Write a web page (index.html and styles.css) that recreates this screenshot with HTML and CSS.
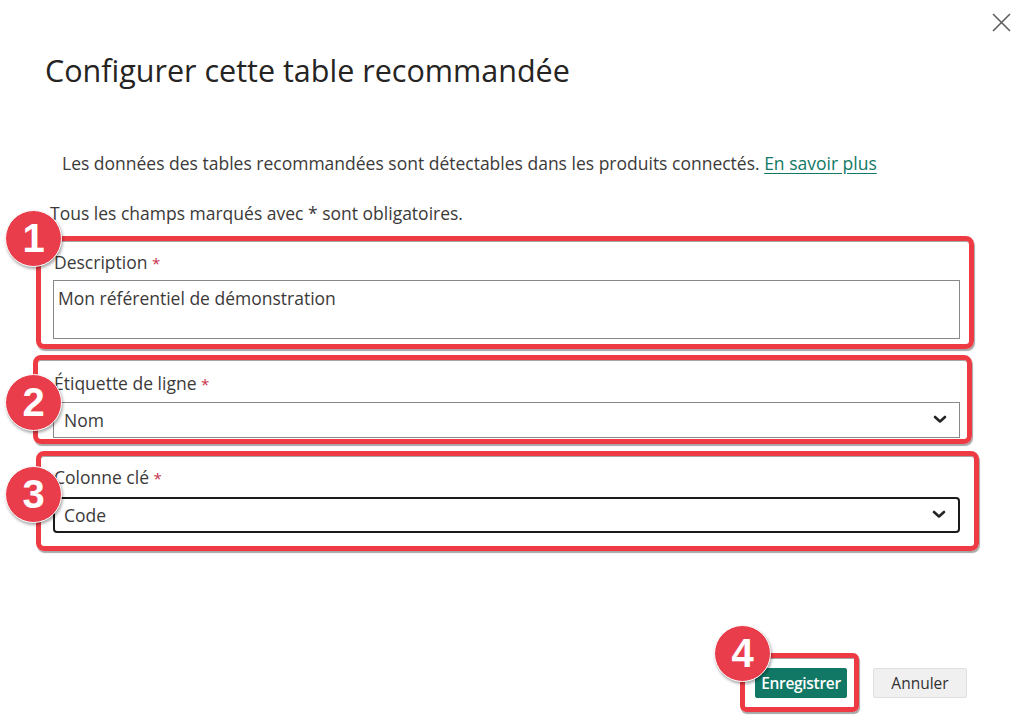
FILE: index.html
```html
<!DOCTYPE html>
<html lang="fr">
<head>
<meta charset="utf-8">
<title>Configurer cette table recommandée</title>
<link rel="stylesheet" href="styles.css">
</head>
<body>
<div class="dialog">
  <div class="topbar">
    <button class="close" aria-label="Fermer">
      <svg width="19" height="19" viewBox="0 0 19 19"><path d="M1 1 L18 18 M18 1 L1 18" stroke="#605e5c" stroke-width="1.6" fill="none"/></svg>
    </button>
  </div>
  <h1 class="title">Configurer cette table recommandée</h1>
  <p class="info">Les données des tables recommandées sont détectables dans les produits connectés. <a href="#" class="link">En savoir plus</a></p>
  <p class="note">Tous les champs marqués avec * sont obligatoires.</p>

  <div class="annot annot-1">
    <span class="badge">1</span>
    <div class="label">Description <span class="req">*</span></div>
    <div class="textarea">Mon référentiel de démonstration</div>
  </div>

  <div class="annot annot-2">
    <span class="badge">2</span>
    <div class="label">Étiquette de ligne <span class="req">*</span></div>
    <div class="select">
      <span>Nom</span>
      <svg class="chev" width="14" height="9" viewBox="0 0 14 9"><path d="M2 2 L7 6.5 L12 2" stroke="#252423" stroke-width="2.6" fill="none" stroke-linecap="round" stroke-linejoin="round"/></svg>
    </div>
  </div>

  <div class="annot annot-3">
    <span class="badge">3</span>
    <div class="label">Colonne clé <span class="req">*</span></div>
    <div class="select select-focus">
      <span>Code</span>
      <svg class="chev" width="14" height="9" viewBox="0 0 14 9"><path d="M2 2 L7 6.5 L12 2" stroke="#252423" stroke-width="2.6" fill="none" stroke-linecap="round" stroke-linejoin="round"/></svg>
    </div>
  </div>

  <div class="footer">
    <div class="annot annot-4">
      <span class="badge">4</span>
      <button class="btn btn-primary">Enregistrer</button>
    </div>
    <button class="btn btn-secondary">Annuler</button>
  </div>
</div>
</body>
</html>
```

FILE: styles.css
```css
* { box-sizing: border-box; }
html, body {
  margin: 0;
  padding: 0;
  background: #ffffff;
}
body {
  font-family: "Open Sans", "Noto Sans", "Liberation Sans", sans-serif;
  color: #323130;
  width: 1024px;
  height: 715px;
  overflow: hidden;
}
.dialog {
  display: flex;
  flex-direction: column;
}
.topbar {
  display: flex;
  justify-content: flex-end;
  padding: 13px 13px 0 0;
  height: 32px;
}
.close {
  width: 19px;
  height: 19px;
  padding: 0;
  border: 0;
  background: transparent;
  display: flex;
}
.title {
  margin: 20px 0 0 45px;
  font-size: 30.5px;
  line-height: 36px;
  font-weight: 400;
  color: #252423;
}
.info {
  margin: 64px 0 0 62px;
  font-size: 17.5px;
  line-height: 22px;
  color: #3b3a39;
}
.link {
  color: #117865;
  text-decoration: underline;
  text-underline-offset: 3px;
}
.note {
  margin: 28px 0 0 50px;
  font-size: 17.5px;
  line-height: 22px;
  color: #3b3a39;
}
.annot {
  position: relative;
  border: 5px solid #ee3b43;
  border-radius: 8px;
  box-shadow: 1px 2px 1px rgba(0, 0, 0, 0.35), inset 0 1px 0 rgba(0, 0, 0, 0.35);
}
.annot-1 {
  margin: 12px 0 0 36px;
  width: 938px;
  padding: 10px 9px 5px 12px;
}
.annot-2 {
  margin: 6px 0 0 33px;
  width: 939px;
  padding: 12px 7px 1px 15px;
}
.annot-3 {
  margin: 7px 0 0 36px;
  width: 943px;
  padding: 10px 14px 13px 12px;
}
.label {
  font-size: 17.5px;
  line-height: 22px;
  height: 22px;
  color: #3b3a39;
  padding-left: 1px;
}
.req {
  color: #c4314b;
  font-size: 15px;
  line-height: 1;
}
.annot-1 .label { margin-bottom: 7px; }
.annot-2 .label { margin-bottom: 8px; }
.annot-3 .label { margin-bottom: 9px; }
.textarea {
  height: 59px;
  border: 1.5px solid #8a8886;
  padding: 6px 4px;
  font-size: 17.5px;
  line-height: 22px;
  color: #3b3a39;
}
.select {
  height: 36px;
  border: 1px solid #8a8886;
  display: flex;
  align-items: center;
  justify-content: space-between;
  padding: 0 12px 0 10px;
  font-size: 17.5px;
  color: #3b3a39;
}
.select-focus {
  border: 2px solid #1b1a19;
  border-radius: 4px;
  padding-left: 9px;
}
.chev {
  margin-top: -2px;
}
.badge {
  position: absolute;
  width: 57px;
  height: 57px;
  border-radius: 50%;
  background: #ea3d4c;
  border: 1.5px solid #ffffff;
  box-shadow: 1px 2px 3px rgba(0, 0, 0, 0.35);
  color: #ffffff;
  font-family: "Liberation Sans", "Open Sans", sans-serif;
  font-weight: 700;
  font-size: 40px;
  line-height: 54px;
  text-align: center;
  z-index: 2;
}
.annot-1 .badge { left: -36px; top: -31px; }
.annot-2 .badge { left: -33px; top: 14px; }
.annot-3 .badge { left: -36px; top: 10px; }
.annot-4 .badge { left: -31px; top: -33px; }
.footer {
  display: flex;
  justify-content: flex-end;
  align-items: flex-start;
  margin-top: 102px;
  padding-right: 57px;
}
.annot-4 {
  padding: 10px 7px 9px 10px;
  border-radius: 6px;
  margin-right: 14px;
}
.btn {
  height: 30px;
  font-family: "Open Sans", "Noto Sans", sans-serif;
  font-size: 15.5px;
  border-radius: 2px;
  display: block;
}
.btn-primary {
  width: 92px;
  background: #117865;
  color: #ffffff;
  border: 1px solid #117865;
  font-weight: 600;
  padding: 0;
  letter-spacing: -0.3px;
}
.btn-secondary {
  margin-top: 15px;
  width: 94px;
  background: #f0f0f0;
  color: #323130;
  border: 1px solid #e1dfdd;
  padding: 0;
}
```
